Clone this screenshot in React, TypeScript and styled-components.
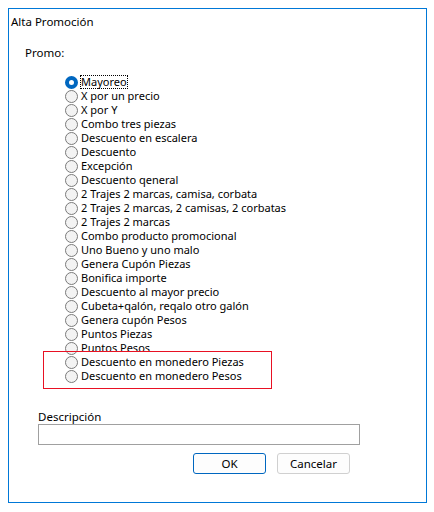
import React, { useState } from "react";
import styled, { createGlobalStyle } from "styled-components";

const GlobalStyle = createGlobalStyle`
  html, body {
    margin: 0;
    padding: 0;
    background: #ffffff;
  }
  body {
    font-family: "Noto Sans", "Open Sans", sans-serif;
    font-size: 11.5px;
    color: #000000;
  }
`;

const Frame = styled.div`
  box-sizing: border-box;
  margin: 8px;
  width: 419px;
  height: 495px;
  border: 1px solid #0078d7;
  padding: 5px 0 0 2px;
  display: flex;
  flex-direction: column;
`;

const Title = styled.div`
  line-height: 16px;
`;

const Section = styled.div`
  margin: 15px 0 0 14px;
  line-height: 16px;
`;

const RadioList = styled.div`
  display: flex;
  flex-direction: column;
  margin: 14px 0 0 54px;
  font-size: 11px;
`;

const Row = styled.label`
  display: flex;
  align-items: center;
  height: 14px;
  line-height: 14px;
  white-space: nowrap;
`;

const Circle = styled.span<{ checked: boolean }>`
  box-sizing: border-box;
  width: 13px;
  height: 13px;
  border-radius: 50%;
  flex: none;
  margin-right: 3px;
  border: ${({ checked }) => (checked ? "4px solid #0067c0" : "1px solid #7a7a7a")};
  background: ${({ checked }) => (checked ? "#ffffff" : "#f3f3f3")};
`;

const Caption = styled.span<{ focused: boolean }>`
  display: block;
  padding: 0 1px;
  margin-left: -1px;
  height: 14px;
  line-height: 13px;
  outline: ${({ focused }) => (focused ? "1px dotted #000" : "none")};
  outline-offset: -1px;
`;

const Highlight = styled.div`
  box-sizing: border-box;
  display: flex;
  flex-direction: column;
  width: 229px;
  margin: -4px 0 0 -22px;
  padding: 3px 0 5px 21px;
  border: 1px solid #e81123;
`;

const Field = styled.div`
  display: flex;
  flex-direction: column;
  margin: 21px 0 0 27px;
`;

const FieldLabel = styled.div`
  line-height: 14px;
`;

const TextBox = styled.div`
  box-sizing: border-box;
  width: 322px;
  height: 21px;
  border: 1px solid #a0a0a0;
  background: #ffffff;
`;

const Buttons = styled.div`
  display: flex;
  gap: 11px;
  margin: 8px 0 0 182px;
`;

const Button = styled.button<{ primary?: boolean }>`
  box-sizing: border-box;
  width: 73px;
  height: 21px;
  padding: 0;
  font-family: inherit;
  font-size: 11.5px;
  color: #000;
  border-radius: 3px;
  background: #fdfdfd;
  border: 1px solid ${({ primary }) => (primary ? "#0067c0" : "#d0d0d0")};
`;

const options = [
  "Mayoreo",
  "X por un precio",
  "X por Y",
  "Combo tres piezas",
  "Descuento en escalera",
  "Descuento",
  "Excepción",
  "Descuento qeneral",
  "2 Trajes 2 marcas, camisa, corbata",
  "2 Trajes 2 marcas, 2 camisas, 2 corbatas",
  "2 Trajes 2 marcas",
  "Combo producto promocional",
  "Uno Bueno y uno malo",
  "Genera Cupón Piezas",
  "Bonifica importe",
  "Descuento al mayor precio",
  "Cubeta+qalón, reqalo otro galón",
  "Genera cupón Pesos",
  "Puntos Piezas",
  "Puntos Pesos",
];

const highlighted = ["Descuento en monedero Piezas", "Descuento en monedero Pesos"];

export default function App() {
  const [selected, setSelected] = useState("Mayoreo");

  const renderRow = (name: string, index: number) => (
    <Row key={name} onClick={() => setSelected(name)}>
      <Circle checked={selected === name} />
      <Caption focused={index === 0}>{name}</Caption>
    </Row>
  );

  return (
    <>
      <GlobalStyle />
      <Frame>
        <Title>Alta Promoción</Title>
        <Section>Promo:</Section>
        <RadioList>
          {options.map(renderRow)}
          <Highlight>{highlighted.map((n, i) => renderRow(n, i + options.length))}</Highlight>
        </RadioList>
        <Field>
          <FieldLabel>Descripción</FieldLabel>
          <TextBox />
        </Field>
        <Buttons>
          <Button primary>OK</Button>
          <Button>Cancelar</Button>
        </Buttons>
      </Frame>
    </>
  );
}
